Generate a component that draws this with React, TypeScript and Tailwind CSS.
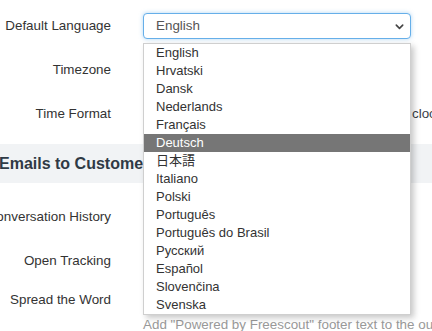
import React from "react";

const languages = [
  "English",
  "Hrvatski",
  "Dansk",
  "Nederlands",
  "Français",
  "Deutsch",
  "日本語",
  "Italiano",
  "Polski",
  "Português",
  "Português do Brasil",
  "Русский",
  "Español",
  "Slovenčina",
  "Svenska",
];

function Label({ children }: { children: React.ReactNode }) {
  return (
    <div className="w-[111px] shrink-0 flex justify-end whitespace-nowrap text-[13.4px] text-[#333]">
      {children}
    </div>
  );
}

export default function App() {
  const selected = "Deutsch";

  return (
    <div className="w-[432px] h-[331px] overflow-hidden bg-white relative font-['Liberation_Sans','Noto_Sans_CJK_JP',Arial,sans-serif] text-[13px] text-[#333]">
      <div className="pt-[4px]">
        {/* Default Language */}
        <div className="flex h-[44px] items-center gap-[32px]">
          <Label>Default Language</Label>
          <div className="relative w-[268px] shrink-0">
            <div className="h-[26px] flex items-center justify-between pl-[12px] pr-[5px] border border-[#66afe9] rounded-[4px] bg-white text-[#555] text-[13.4px] shadow-[0_0_4px_rgba(102,175,233,0.5)]">
              <span>English</span>
              <svg width="11" height="11" viewBox="0 0 24 24" fill="none" stroke="#444" strokeWidth="3.5" strokeLinecap="round" strokeLinejoin="round">
                <path d="M5 9l7 7 7-7" />
              </svg>
            </div>
            <div className="absolute z-10 left-0 top-[30px] w-[268px] bg-white border border-[#cfcfcf] shadow-[3px_3px_6px_rgba(0,0,0,0.22)]">
              {languages.map((lang) => (
                <div
                  key={lang}
                  className={`h-[18px] leading-[18px] pl-[12px] whitespace-nowrap ${
                    lang === selected ? "bg-[#767676] text-white" : "text-[#333]"
                  }`}
                >
                  {lang}
                </div>
              ))}
            </div>
          </div>
        </div>

        {/* Timezone */}
        <div className="flex h-[44px] items-center gap-[32px]">
          <Label>Timezone</Label>
          <div className="flex-1" />
        </div>

        {/* Time Format */}
        <div className="flex h-[44px] items-center gap-[32px]">
          <Label>Time Format</Label>
          <div className="flex-1 min-w-0">
            <span className="ml-[269px] whitespace-nowrap text-[13.4px] text-[#3a3f4a]">clock (2:30pm)</span>
          </div>
        </div>

        {/* Section heading */}
        <div className="mt-[8px] h-[39px] bg-[#f1f3f5] flex items-center">
          <h3 className="ml-[-1px] text-[16px] font-bold text-[#2f3a45] whitespace-nowrap">
            Emails to Customers
          </h3>
        </div>

        {/* Conversation History */}
        <div className="mt-[12px] flex h-[44px] items-center gap-[32px]">
          <Label>Conversation History</Label>
          <div className="flex-1" />
        </div>

        {/* Open Tracking */}
        <div className="flex h-[44px] items-center gap-[32px]">
          <Label>Open Tracking</Label>
          <div className="flex-1" />
        </div>

        {/* Spread the Word */}
        <div className="flex items-start gap-[32px]">
          <div className="h-[34px] flex items-center">
            <Label>Spread the Word</Label>
          </div>
          <div className="flex-1 min-w-0">
            <div className="h-[33px]" />
            <p className="leading-[18px] whitespace-nowrap text-[13.4px] text-[#999]">
              Add "Powered by Freescout" footer text to the outgoing emails.
            </p>
          </div>
        </div>
      </div>
    </div>
  );
}
